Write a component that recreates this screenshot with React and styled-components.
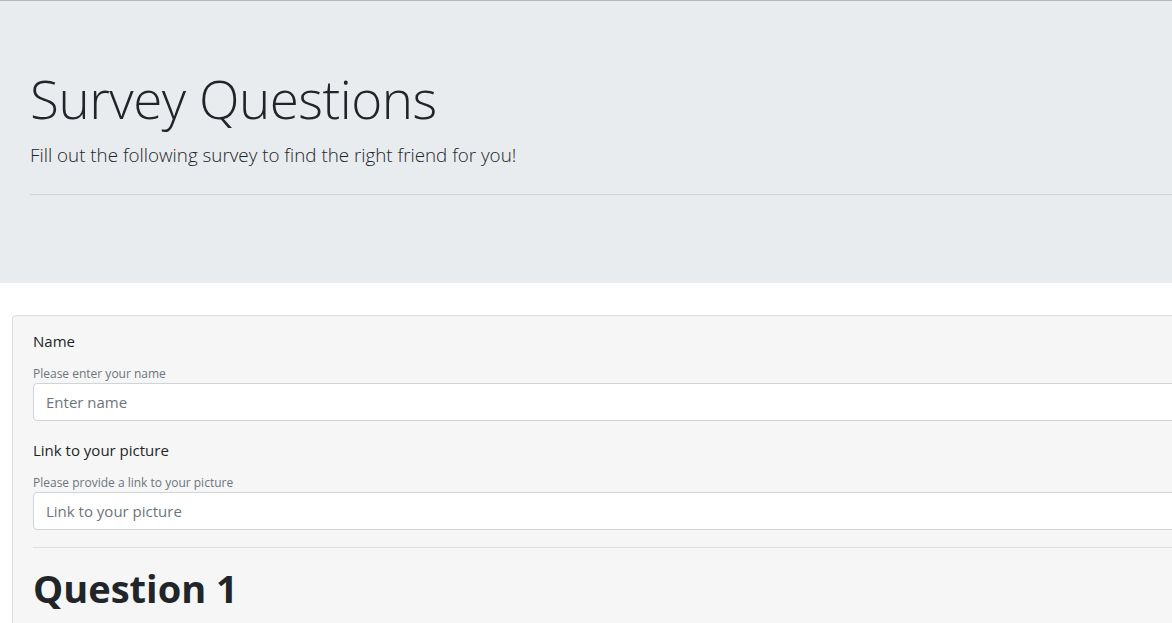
import React from "react";
import styled, { createGlobalStyle } from "styled-components";

const GlobalStyle = createGlobalStyle`
  html, body {
    margin: 0;
    padding: 0;
    overflow: hidden;
  }
  body {
    border-top: 1px solid #b4b6b9;
    font-family: "Open Sans", "Noto Sans", sans-serif;
    color: #212529;
    background: #fff;
  }
`;

const Page = styled.div`
  width: 1400px;
`;

const Jumbotron = styled.header`
  background: #e9ecef;
  padding: 64px 0 64px 30px;
  margin-bottom: 32px;
`;

const Title = styled.h1`
  margin: 0 0 8px;
  font-size: 53px;
  font-weight: 300;
  line-height: 67px;
  letter-spacing: -0.5px;
`;

const Lead = styled.p`
  margin: 0;
  font-size: 18.8px;
  font-weight: 300;
  line-height: 30px;
`;

const Rule = styled.hr`
  border: 0;
  border-top: 1px solid ${(p) => p.$color || "rgba(0, 0, 0, 0.1)"};
  margin: ${(p) => p.$space || "24px 0"};
`;

const Card = styled.section`
  margin-left: 12px;
  background: #f6f6f6;
  border: 1px solid #dcdcdc;
  border-radius: 4px;
  padding: 13px 20px 20px;
`;

const Group = styled.div`
  margin-bottom: 17px;
`;

const Label = styled.label`
  display: block;
  font-size: 15px;
  line-height: 24px;
  margin-bottom: 12px;
`;

const Help = styled.small`
  display: block;
  font-size: 12px;
  line-height: 18px;
  color: #6c757d;
`;

const Input = styled.input`
  display: block;
  box-sizing: border-box;
  width: 100%;
  height: 38px;
  padding: 6px 12px;
  font-family: inherit;
  font-size: 15px;
  color: #495057;
  background: #fff;
  border: 1px solid #ced4da;
  border-radius: 4px;
  &::placeholder {
    color: #6c757d;
  }
`;

const Question = styled.h2`
  margin: 3px 0 0;
  font-size: 38px;
  font-weight: 700;
  line-height: 48px;
`;

const fields = [
  { label: "Name", help: "Please enter your name", placeholder: "Enter name" },
  {
    label: "Link to your picture",
    help: "Please provide a link to your picture",
    placeholder: "Link to your picture",
  },
];

export default function App() {
  return (
    <Page>
      <GlobalStyle />
      <Jumbotron>
        <Title>Survey Questions</Title>
        <Lead>Fill out the following survey to find the right friend for you!</Lead>
        <Rule />
      </Jumbotron>
      <Card>
        {fields.map((f) => (
          <Group key={f.label}>
            <Label>{f.label}</Label>
            <Help>{f.help}</Help>
            <Input placeholder={f.placeholder} />
          </Group>
        ))}
        <Rule $space="0 0 16px" $color="#dedede" />
        <Question>Question 1</Question>
      </Card>
    </Page>
  );
}
